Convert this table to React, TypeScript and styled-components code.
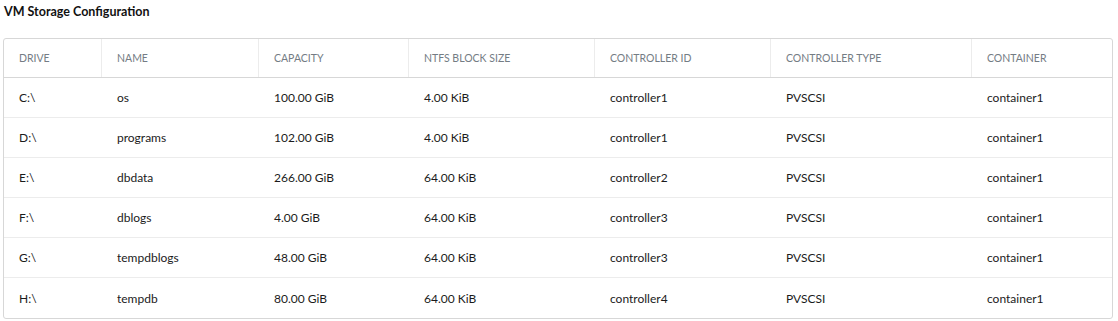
import React from "react";
import styled, { createGlobalStyle } from "styled-components";

const GlobalStyle = createGlobalStyle`
  html, body { margin: 0; padding: 0; background: #fff; }
  body { font-family: "Lato", "Liberation Sans", sans-serif; color: #000; }
  * { box-sizing: border-box; }
`;

const Page = styled.div`
  padding: 3px 0 0 3px;
  width: 1113px;
`;

const Title = styled.h2`
  margin: 0;
  height: 35px;
  font-size: 12.5px;
  font-weight: 700;
  line-height: 17px;
  color: #111;
  padding-left: 1px;
`;

const Grid = styled.div`
  border: 1px solid #d7d7d7;
  border-radius: 3px;
  width: 1110px;
  overflow: hidden;
`;

const cols = "97px 157px 150px 186px 176px 201px 1fr";

const HeaderRow = styled.div`
  display: grid;
  grid-template-columns: ${cols};
  height: 39px;
  border-bottom: 1px solid #d7d7d7;
`;

const HeaderCell = styled.div<{ $first?: boolean }>`
  display: flex;
  align-items: center;
  padding-left: 15px;
  font-size: 10.5px;
  color: #747c84;
  border-left: ${(p) => (p.$first ? "none" : "1px solid #ececec")};
`;

const Row = styled.div<{ $last?: boolean }>`
  display: grid;
  grid-template-columns: ${cols};
  height: 40px;
  border-bottom: ${(p) => (p.$last ? "none" : "1px solid #ececec")};
`;

const Cell = styled.div<{ $first?: boolean }>`
  display: flex;
  align-items: center;
  padding-left: ${(p) => (p.$first ? "15px" : "16px")};
  font-size: 12px;
  color: #1b1b1b;
`;

const headers = [
  "DRIVE",
  "NAME",
  "CAPACITY",
  "NTFS BLOCK SIZE",
  "CONTROLLER ID",
  "CONTROLLER TYPE",
  "CONTAINER",
];

const rows = [
  ["C:\\", "os", "100.00 GiB", "4.00 KiB", "controller1", "PVSCSI", "container1"],
  ["D:\\", "programs", "102.00 GiB", "4.00 KiB", "controller1", "PVSCSI", "container1"],
  ["E:\\", "dbdata", "266.00 GiB", "64.00 KiB", "controller2", "PVSCSI", "container1"],
  ["F:\\", "dblogs", "4.00 GiB", "64.00 KiB", "controller3", "PVSCSI", "container1"],
  ["G:\\", "tempdblogs", "48.00 GiB", "64.00 KiB", "controller3", "PVSCSI", "container1"],
  ["H:\\", "tempdb", "80.00 GiB", "64.00 KiB", "controller4", "PVSCSI", "container1"],
];

export default function App() {
  return (
    <>
      <GlobalStyle />
      <Page>
        <Title>VM Storage Configuration</Title>
        <Grid>
          <HeaderRow>
            {headers.map((h, i) => (
              <HeaderCell key={h} $first={i === 0}>
                {h}
              </HeaderCell>
            ))}
          </HeaderRow>
          {rows.map((r, ri) => (
            <Row key={ri} $last={ri === rows.length - 1}>
              {r.map((c, ci) => (
                <Cell key={ci} $first={ci === 0}>
                  {c}
                </Cell>
              ))}
            </Row>
          ))}
        </Grid>
      </Page>
    </>
  );
}
